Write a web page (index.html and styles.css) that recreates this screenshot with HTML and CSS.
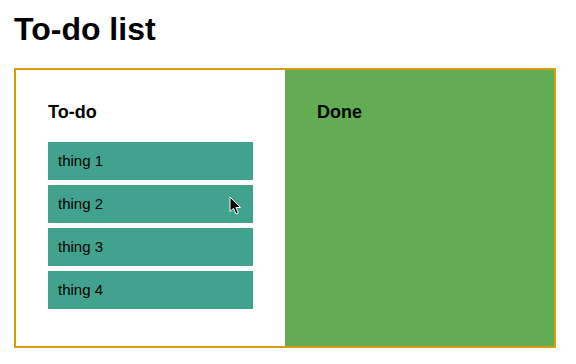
FILE: index.html
```html
<!DOCTYPE html>
<html>
<head>
<meta charset="utf-8">
<title>To-do list</title>
<link rel="stylesheet" href="styles.css">
</head>
<body>
<div class="page">
  <h1 class="title">To-do list</h1>
  <div class="board">
    <section class="column column-todo">
      <h3 class="column-title">To-do</h3>
      <ul class="items">
        <li class="item">thing 1</li>
        <li class="item item-hover">thing 2
          <svg class="cursor" width="13" height="19" viewBox="0 0 13 19"><path d="M1 1 L1 15.5 L4.5 12.3 L7 18 L9.3 17 L6.9 11.5 L11.5 11.5 Z" fill="#000" stroke="#fff" stroke-width="1" stroke-linejoin="round"/></svg>
        </li>
        <li class="item">thing 3</li>
        <li class="item">thing 4</li>
      </ul>
    </section>
    <section class="column column-done">
      <h3 class="column-title">Done</h3>
    </section>
  </div>
</div>
</body>
</html>
```

FILE: styles.css
```css
html, body {
  margin: 0;
  padding: 0;
  background: #ffffff;
}
body {
  font-family: "Liberation Sans", Arial, Helvetica, sans-serif;
  color: #000;
}
.page {
  padding: 11px 20px 0 14px;
}
.title {
  margin: 0 0 21px;
  font-size: 32px;
  line-height: 36px;
  font-weight: bold;
}
.board {
  width: 538px;
  border: 2px solid #da9b10;
  display: grid;
  grid-template-columns: 1fr 1fr;
}
.column {
  padding: 32px;
}
.column-done {
  background: #62ad52;
}
.column-title {
  margin: 0 0 20px;
  font-size: 18px;
  line-height: 20px;
  font-weight: bold;
}
.items {
  list-style: none;
  margin: 0;
  padding: 0;
}
.item {
  position: relative;
  height: 38px;
  margin-bottom: 5px;
  padding: 0 10px 2px;
  box-sizing: border-box;
  display: flex;
  align-items: center;
  background: #41a38e;
  font-size: 15px;
}
.cursor {
  position: absolute;
  left: 181px;
  top: 11px;
}
```
